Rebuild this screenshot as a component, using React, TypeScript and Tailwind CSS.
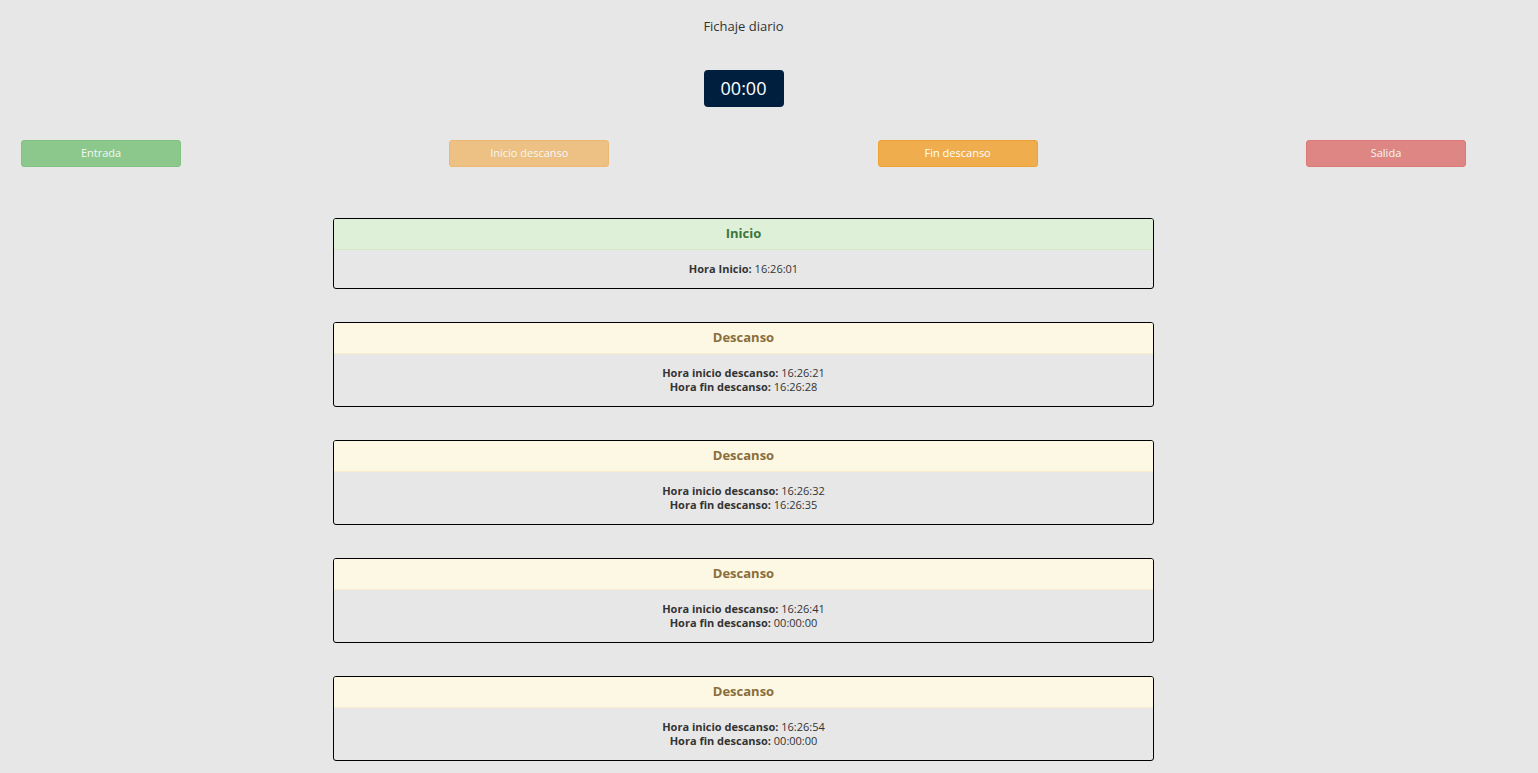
import React from 'react'

type Descanso = { inicio: string; fin: string }

const descansos: Descanso[] = [
    { inicio: '16:26:21', fin: '16:26:28' },
    { inicio: '16:26:32', fin: '16:26:35' },
    { inicio: '16:26:41', fin: '00:00:00' },
    { inicio: '16:26:54', fin: '00:00:00' },
]

const App = () => {
    return (
        <div className="min-h-[773px] bg-[#e7e7e7] text-[#333] font-['Open_Sans',sans-serif]">
            <div className="w-[1487px] flex flex-col items-center">
                <h1 className="mt-[17px] text-[13px] leading-[18px] text-[#333]">Fichaje diario</h1>

                <div className="mt-[35px] w-[80px] h-[37px] rounded-[4px] bg-[#001f3f] text-white text-[18px] flex items-center justify-center">
                    00:00
                </div>

                <div className="mt-[33px] w-full px-[21px] flex justify-between">
                    <button className="w-[160px] h-[27px] rounded-[3px] border border-[#4cae4c] bg-[#5cb85c] text-white text-[11px] opacity-65">
                        Entrada
                    </button>
                    <button className="w-[160px] h-[27px] rounded-[3px] border border-[#eea236] bg-[#f0ad4e] text-white text-[11px] opacity-65">
                        Inicio descanso
                    </button>
                    <button className="w-[160px] h-[27px] rounded-[3px] border border-[#eea236] bg-[#f0ad4e] text-white text-[11px]">
                        Fin descanso
                    </button>
                    <button className="w-[160px] h-[27px] rounded-[3px] border border-[#d43f3a] bg-[#d9534f] text-white text-[11px] opacity-65">
                        Salida
                    </button>
                </div>

                <div className="mt-[51px] w-[821px] flex flex-col gap-[33px]">
                    <div className="border border-black rounded-[3px] overflow-hidden">
                        <div className="h-[31px] bg-[#dff0d8] border-b border-[#d6e9c6] text-[#3c763d] text-[13px] font-bold flex items-center justify-center">
                            Inicio
                        </div>
                        <div className="h-[38px] flex items-center justify-center text-[11px]">
                            <p><b>Hora Inicio:</b> 16:26:01</p>
                        </div>
                    </div>

                    {descansos.map((d, i) => (
                        <div key={i} className="border border-black rounded-[3px] overflow-hidden">
                            <div className="h-[31px] bg-[#fcf8e3] border-b border-[#faebcc] text-[#8a6d3b] text-[13px] font-bold flex items-center justify-center">
                                Descanso
                            </div>
                            <div className="h-[52px] flex flex-col items-center justify-center text-[11px] leading-[14px]">
                                <p><b>Hora inicio descanso:</b> {d.inicio}</p>
                                <p><b>Hora fin descanso:</b> {d.fin}</p>
                            </div>
                        </div>
                    ))}
                </div>
            </div>
        </div>
    )
}

export default App
